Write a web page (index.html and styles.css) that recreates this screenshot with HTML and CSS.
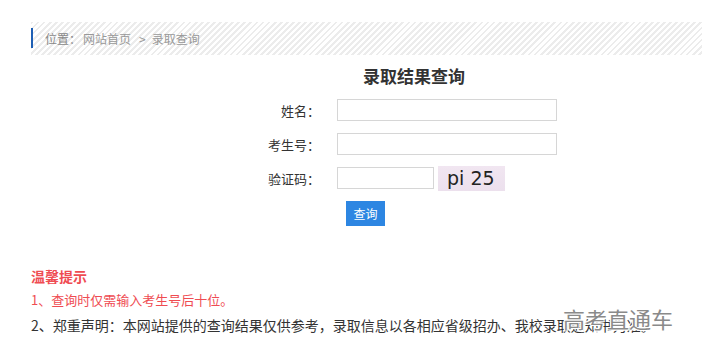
FILE: index.html
```html
<!DOCTYPE html>
<html lang="zh-CN">
<head>
    <meta charset="UTF-8">
    <meta name="viewport" content="width=device-width, initial-scale=1.0">
    <title>录取结果查询</title>
    <link rel="stylesheet" href="styles.css">
</head>
<body>
    <div class="page">
        <div class="crumb">
            <span class="crumb-label">位置：</span>
            <a href="#">网站首页</a>
            <span class="sep">&gt;</span>
            <a href="#">录取查询</a>
        </div>

        <form class="query" action="#" method="post">
            <h1>录取结果查询</h1>
            <div class="row">
                <label for="name">姓名：</label>
                <input type="text" id="name" name="name" class="long">
            </div>
            <div class="row">
                <label for="ksh">考生号：</label>
                <input type="text" id="ksh" name="ksh" class="long">
            </div>
            <div class="row">
                <label for="code">验证码：</label>
                <input type="text" id="code" name="code" class="short">
                <span class="captcha">pi 25</span>
            </div>
            <div class="row">
                <span class="spacer"></span>
                <button type="submit" class="btn">查询</button>
            </div>
        </form>

        <div class="tips">
            <h2>温馨提示</h2>
            <p class="warn">1、查询时仅需输入考生号后十位。</p>
            <p class="notice">2、郑重声明：本网站提供的查询结果仅供参考，录取信息以各相应省级招办、我校录取通知书为准。</p>
        </div>
    </div>
    <div class="watermark">高考直通车</div>
</body>
</html>
```

FILE: styles.css
```css
body {
    margin: 0;
    font-family: "Microsoft YaHei", "Noto Sans CJK SC", sans-serif;
    background: #fff;
    color: #333;
    overflow: hidden;
}
.page {
    padding: 22px 0 0 31px;
    width: 900px;
}
.crumb {
    height: 33px;
    display: flex;
    align-items: center;
    font-size: 12px;
    color: #888;
    background: repeating-linear-gradient(135deg, #ececec 0 2px, #fff 2px 4.3px);
    position: relative;
    padding-left: 14px;
}
.crumb::before {
    content: "";
    position: absolute;
    left: 0;
    top: 6px;
    width: 2px;
    height: 20px;
    background: #1e5fb4;
}
.crumb a {
    color: #999;
    text-decoration: none;
}
.crumb-label {
    margin-right: 2px;
}
.sep {
    margin: 0 6px 0 8px;
    color: #999;
}
.query {
    margin-left: 209px;
    width: 348px;
}
.query h1 {
    margin: 9px 0 11px;
    text-align: center;
    font-size: 17px;
    line-height: 24px;
    color: #333;
}
.row {
    display: flex;
    align-items: center;
    height: 22px;
    margin-bottom: 12px;
    gap: 17px;
}
.row label,
.spacer {
    width: 80px;
    text-align: right;
    font-size: 13px;
    color: #333;
}
.row input {
    box-sizing: border-box;
    height: 22px;
    border: 1px solid #d6d6d6;
    padding: 0 4px;
    outline: none;
}
.long {
    width: 220px;
}
.short {
    width: 97px;
}
.captcha {
    margin-left: -13px;
    width: 67px;
    height: 25px;
    box-sizing: border-box;
    padding-left: 9px;
    background: linear-gradient(#f1e6f1, #ece0ed);
    font-family: "DejaVu Sans", sans-serif;
    font-size: 19px;
    line-height: 25px;
    color: #222;
}
.btn {
    margin-left: 9px;
    margin-top: 2px;
    width: 39px;
    height: 25px;
    border: none;
    background: #2d86e2;
    color: #fff;
    font-family: inherit;
    font-size: 12px;
    padding: 0;
    cursor: pointer;
}
.tips {
    margin-top: 43px;
}
.tips h2 {
    margin: 0;
    font-size: 14px;
    line-height: 20px;
    color: #ef4c52;
}
.tips p {
    margin: 4px 0 0;
    font-size: 13px;
    line-height: 20px;
    white-space: nowrap;
}
.tips .notice {
    margin-top: 5px;
    font-size: 14px;
}
.warn {
    color: #ef4c52;
}
.watermark {
    position: absolute;
    left: 563px;
    top: 302px;
    font-size: 22px;
    color: #8a8a8a;
    text-shadow: 1px 1px 0 #fff, -1px -1px 0 #fff, 1px -1px 0 #fff, -1px 1px 0 #fff;
}
```
